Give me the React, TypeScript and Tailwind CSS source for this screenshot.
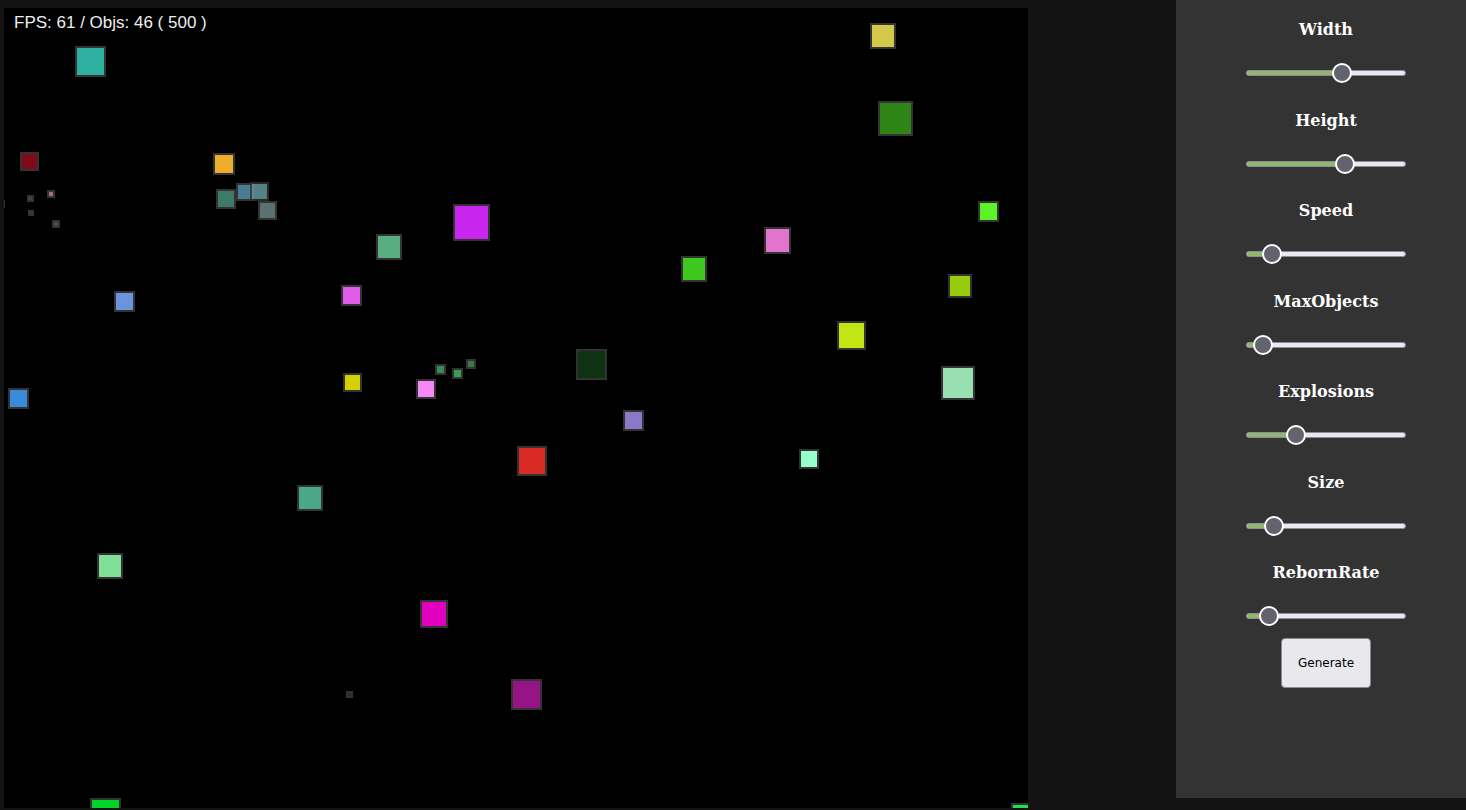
import React from "react";

type Sq = { x: number; y: number; s: number; c: string; o?: number };

// page coordinates (outer box incl. border)
const squares: Sq[] = [
  { x: 75, y: 46, s: 31, c: "#2eb0a0" },
  { x: 20, y: 152, s: 19, c: "#7f0a1a" },
  { x: 213, y: 153, s: 22, c: "#eeac2a" },
  { x: 216, y: 189, s: 20, c: "#3e7a6a" },
  { x: 236, y: 183, s: 18, c: "#4a7c92" },
  { x: 250, y: 182, s: 19, c: "#6aa2a6", o: 0.8 },
  { x: 258, y: 201, s: 19, c: "#5b7072" },
  { x: 27, y: 195, s: 7, c: "#5a3a42" },
  { x: 47, y: 190, s: 8, c: "#a07080" },
  { x: 28, y: 210, s: 6, c: "#4a3038" },
  { x: 52, y: 220, s: 8, c: "#6a4048" },
  { x: -3, y: 200, s: 8, c: "#555555" },
  { x: 453, y: 204, s: 37, c: "#c825ee" },
  { x: 376, y: 234, s: 26, c: "#58ae80" },
  { x: 341, y: 285, s: 21, c: "#e05ce8" },
  { x: 343, y: 373, s: 19, c: "#d6d000" },
  { x: 416, y: 379, s: 20, c: "#f588f5" },
  { x: 435, y: 364, s: 11, c: "#3a8a55" },
  { x: 452, y: 368, s: 11, c: "#3e9e52" },
  { x: 466, y: 359, s: 10, c: "#3a7a48" },
  { x: 576, y: 349, s: 31, c: "#0e3212" },
  { x: 623, y: 410, s: 21, c: "#8c78c8" },
  { x: 517, y: 446, s: 30, c: "#d62a22" },
  { x: 870, y: 23, s: 26, c: "#d4c84a" },
  { x: 878, y: 101, s: 35, c: "#2e8416" },
  { x: 978, y: 201, s: 21, c: "#5cf228" },
  { x: 764, y: 227, s: 27, c: "#e274cc" },
  { x: 681, y: 256, s: 26, c: "#3ec81e" },
  { x: 948, y: 274, s: 24, c: "#98cc0a" },
  { x: 837, y: 321, s: 29, c: "#c2e614" },
  { x: 941, y: 366, s: 34, c: "#9adfb2" },
  { x: 799, y: 449, s: 20, c: "#94ffc8" },
  { x: 114, y: 291, s: 21, c: "#6c94dc" },
  { x: 8, y: 388, s: 21, c: "#3a8ad8" },
  { x: 297, y: 485, s: 26, c: "#4aa888" },
  { x: 97, y: 553, s: 26, c: "#80e098" },
  { x: 420, y: 600, s: 28, c: "#e200c0" },
  { x: 511, y: 679, s: 31, c: "#961486" },
  { x: 346, y: 691, s: 7, c: "#2a2a2a" },
  { x: 90, y: 798, s: 31, c: "#00d42a" },
  { x: 1011, y: 803, s: 24, c: "#1ee44a" },
];

const sliders: { label: string; v: number }[] = [
  { label: "Width", v: 96 },
  { label: "Height", v: 99 },
  { label: "Speed", v: 26 },
  { label: "MaxObjects", v: 17 },
  { label: "Explosions", v: 50 },
  { label: "Size", v: 28 },
  { label: "RebornRate", v: 23 },
];

function Slider({ v }: { v: number }) {
  return (
    <div className="relative w-[160px] h-[20px] flex items-center">
      <div className="relative w-full h-[6px] rounded-full bg-[#e9e7ef] border border-[#8d8d94] overflow-hidden">
        <div className="absolute left-0 top-0 bottom-0 bg-[#92b66f]" style={{ width: v }} />
      </div>
      <div
        className="absolute top-0 w-[20px] h-[20px] rounded-full bg-[#63636f] border-2 border-white"
        style={{ left: v - 10 }}
      />
    </div>
  );
}

export default function App() {
  return (
    <div className="w-[1466px] h-[810px] bg-[#131313] flex items-start overflow-hidden">
      <div className="relative mt-[8px] ml-[4px] w-[1024px] h-[800px] bg-black overflow-hidden">
        {squares.map((q, i) => (
          <div
            key={i}
            className="absolute border-2 border-[#333333]"
            style={{
              left: q.x - 4,
              top: q.y - 8,
              width: q.s,
              height: q.s,
              backgroundColor: q.c,
              opacity: q.o ?? 1,
            }}
          />
        ))}
        <div className="absolute left-[10px] top-[5px] text-[17px] leading-[20px] text-[#eeeeee] font-['Liberation_Sans',Arial,sans-serif] whitespace-pre">
          FPS: 61 / Objs: 46 ( 500 )
        </div>
      </div>
      <div className="ml-auto w-[290px] h-[798px] bg-[#333333] flex flex-col items-center pt-[20px] pl-[10px]">
        <div className="flex flex-col items-center gap-[27.5px]">
          {sliders.map((s) => (
            <div key={s.label} className="flex flex-col items-center">
              <div className="h-[20px] leading-[20px] text-[16px] font-bold text-white font-['DejaVu_Serif',serif]">
                {s.label}
              </div>
              <div className="mt-[23px]">
                <Slider v={s.v} />
              </div>
            </div>
          ))}
        </div>
        <button className="mt-[12px] w-[90px] h-[50px] rounded-[4px] bg-[#e9e8ed] border border-[#8a8a90] text-[12px] text-black font-['DejaVu_Sans',sans-serif]">
          Generate
        </button>
      </div>
    </div>
  );
}
